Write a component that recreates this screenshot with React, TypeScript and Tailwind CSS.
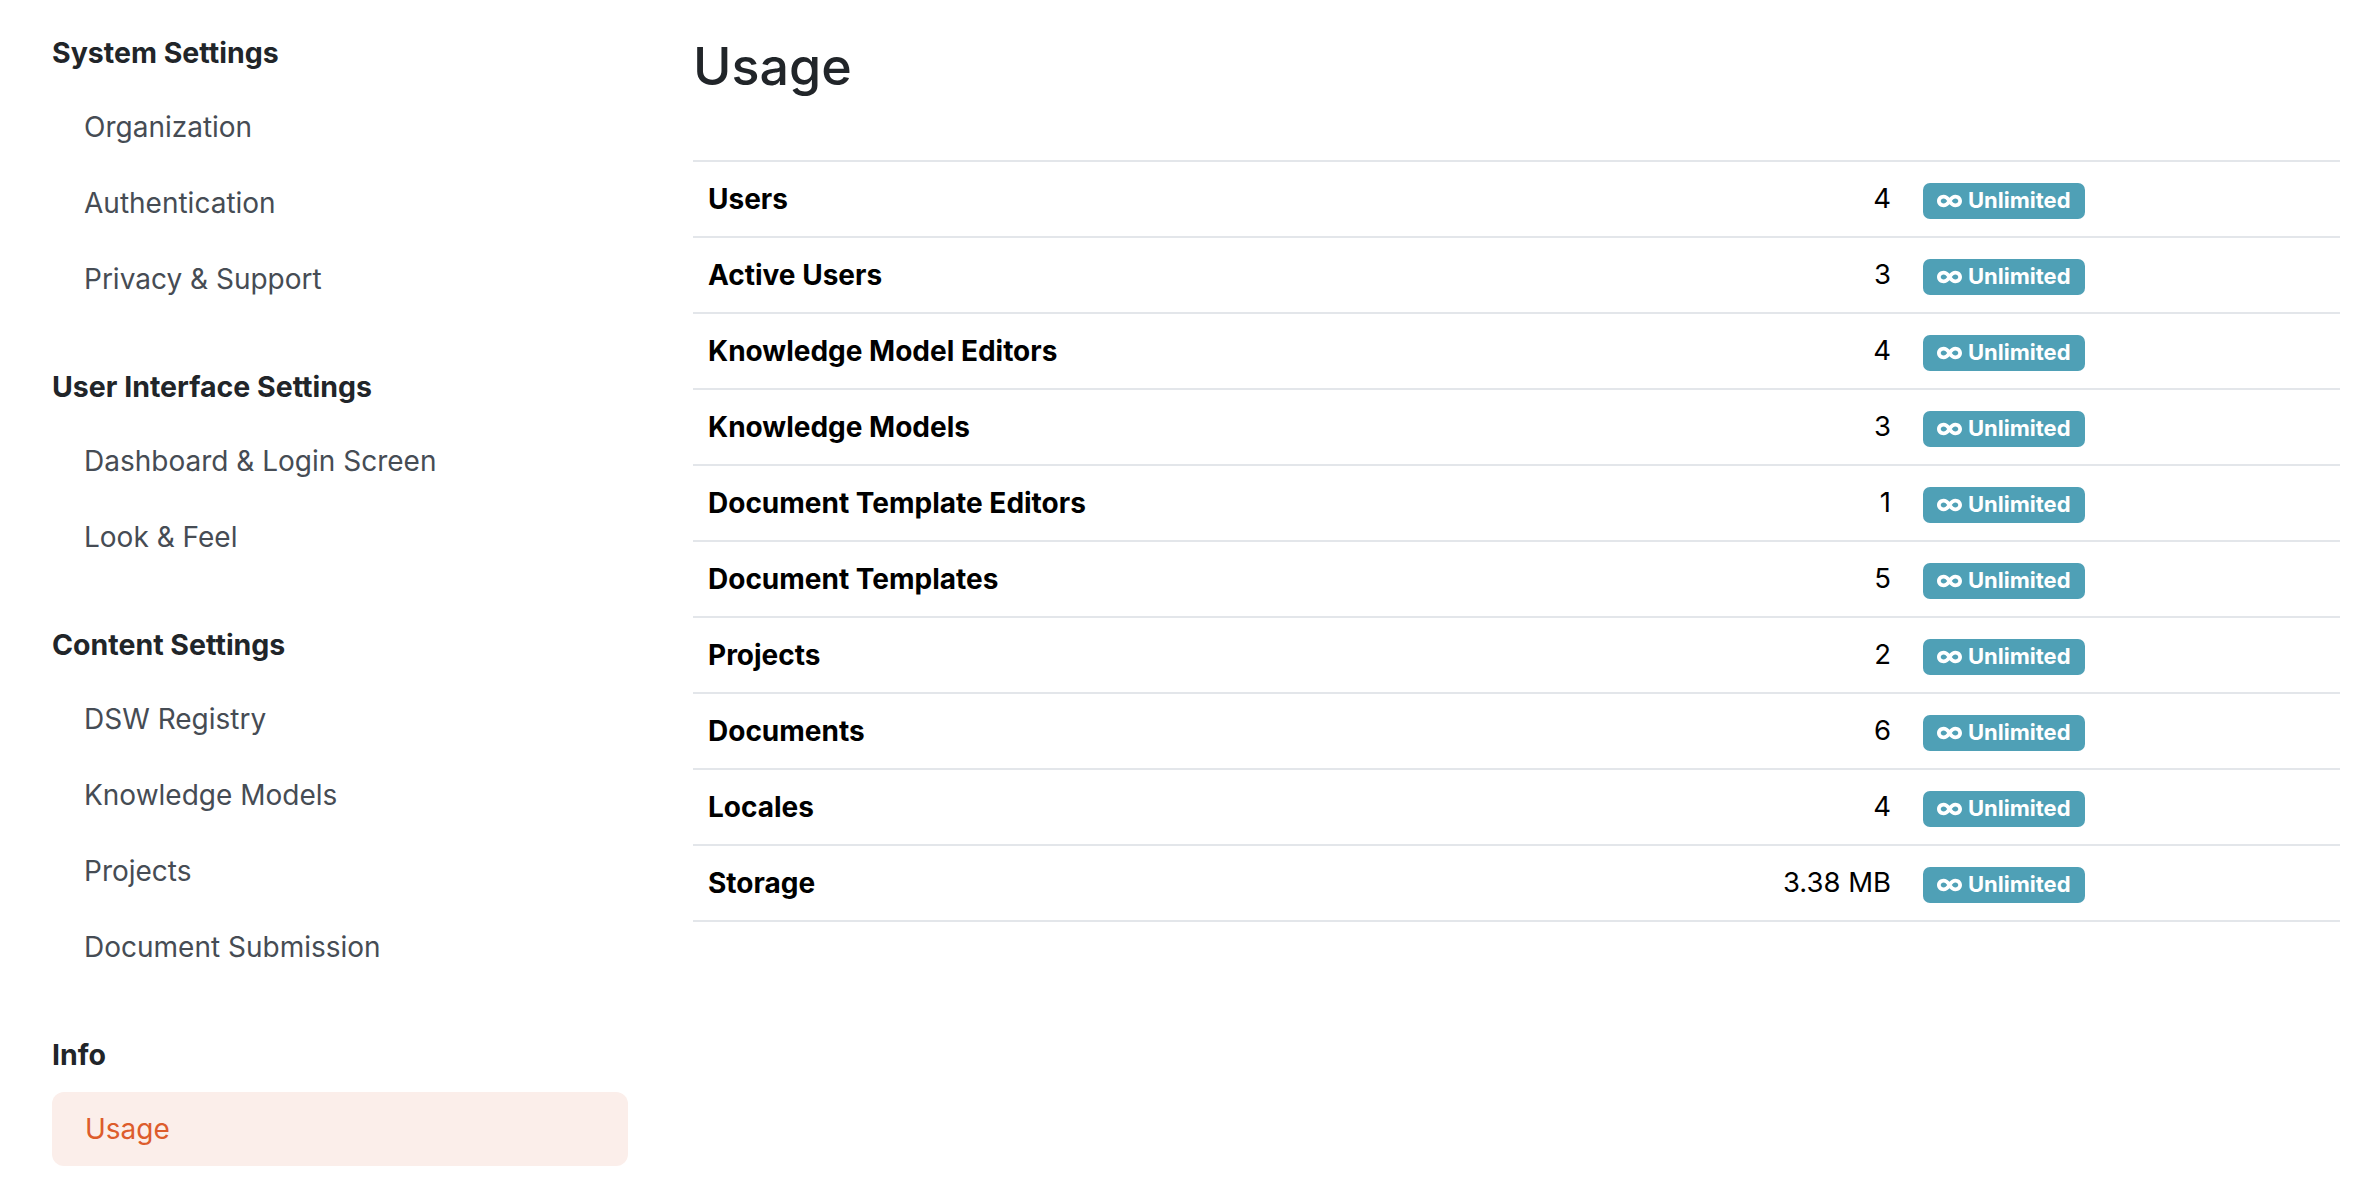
import { FaInfinity } from "react-icons/fa";

const sections = [
  { title: "System Settings", items: ["Organization", "Authentication", "Privacy & Support"] },
  { title: "User Interface Settings", items: ["Dashboard & Login Screen", "Look & Feel"] },
  { title: "Content Settings", items: ["DSW Registry", "Knowledge Models", "Projects", "Document Submission"] },
  { title: "Info", items: ["Usage"] },
];

const usage = [
  { name: "Users", value: "4" },
  { name: "Active Users", value: "3" },
  { name: "Knowledge Model Editors", value: "4" },
  { name: "Knowledge Models", value: "3" },
  { name: "Document Template Editors", value: "1" },
  { name: "Document Templates", value: "5" },
  { name: "Projects", value: "2" },
  { name: "Documents", value: "6" },
  { name: "Locales", value: "4" },
  { name: "Storage", value: "3.38 MB" },
];

function Sidebar() {
  return (
    <nav className="w-[576px] shrink-0">
      {sections.map((section, i) => (
        <div key={section.title} className={i === 0 ? "" : "mt-[53px]"}>
          <h3 className="h-[36px] leading-[36px] mb-[19px] text-[28.5px] font-bold text-[#212529]">{section.title}</h3>
          <div className="flex flex-col gap-[2px]">
            {section.items.map(item => {
              const active = item === "Usage";
              return (
                <a
                  key={item}
                  className={
                    active
                      ? "h-[74px] flex items-center pl-[33px] rounded-[12px] bg-[#fbeeea] text-[#dd5c2c] text-[28px]"
                      : "h-[74px] flex items-center pl-[32px] rounded-[12px] text-[#464c54] text-[28px]"
                  }
                >
                  {item}
                </a>
              );
            })}
          </div>
        </div>
      ))}
    </nav>
  );
}

function UnlimitedBadge() {
  return (
    <span className="inline-flex items-center h-[36px] px-[14px] rounded-[7px] bg-[#4fa0b6] text-white text-[22px] font-bold gap-[6px]">
      <FaInfinity className="w-[25px] h-[20px]" />
      Unlimited
    </span>
  );
}

export default function App() {
  return (
    <div className="min-h-screen bg-white flex pt-[35px] pl-[52px] pr-[32px] gap-[65px]" style={{ fontFamily: "Inter, 'Noto Sans', sans-serif" }}>
      <Sidebar />
      <main className="flex-1">
        <h1 className="h-[64px] leading-[64px] text-[52px] font-medium text-[#212529]">Usage</h1>
        <div className="mt-[61px] border-t-2 border-[#e3e6ea]">
          {usage.map(row => (
            <div key={row.name} className="h-[76px] flex items-center border-b-2 border-[#e3e6ea]">
              <div className="flex-1 pl-[15px] text-[28px] font-bold text-black">{row.name}</div>
              <div className="text-right text-[27.5px] text-black">{row.value}</div>
              <div className="w-[449px] pl-[32px] pt-[3px]">
                <UnlimitedBadge />
              </div>
            </div>
          ))}
        </div>
      </main>
    </div>
  );
}
